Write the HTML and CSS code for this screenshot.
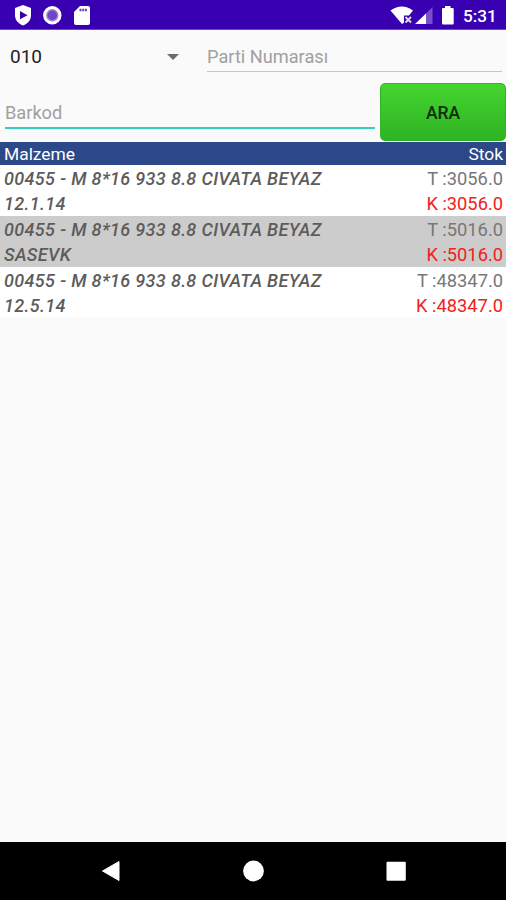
FILE: index.html
```html
<!DOCTYPE html>
<html lang="tr">
<head>
<meta charset="utf-8">
<title>Stok</title>
<link rel="stylesheet" href="styles.css">
</head>
<body>
<header class="status">
  <svg class="status-left" width="100" height="29" viewBox="0 0 100 29">
    <path fill="#fff" d="M23 5l8 3v7c0 5-3 8.500-8 10.500c-5-2-8-5.500-8-10.500v-7z"/>
    <path fill="#3900b1" d="M20 11l7.500 4.200l-7.500 4z"/>
    <circle cx="52.300" cy="15.300" r="7.700" fill="#9d80da" stroke="#fff" stroke-width="3"/>
    <circle cx="52.300" cy="15.300" r="4.700" fill="#7045c6"/>
    <path fill="#fff" d="M80 6h8q2 0 2 2v15q0 2-2 2h-12q-2 0-2-2v-11z"/>
    <path stroke="#6b42c4" stroke-width="2.500" stroke-dasharray="2 .7" d="M79.500 10h7.400" />
  </svg>
  <svg class="status-right" width="66" height="29" viewBox="390 0 66 29">
    <path fill="#fff" d="M390.500 10.500Q402 2.500 413 10.500L409 15.500H404V22.800L402 24z"/>
    <path stroke="#e4daf5" stroke-width="1.800" d="M405.500 17l5.500 5.500m0-5.500l-5.500 5.500"/>
    <path fill="#7950ca" d="M432.500 7v17h-8v-9z"/>
    <path fill="#fff" d="M426 13.500V24H415z"/>
    <path fill="#fff" d="M445 6h5.500v2h2.200q1 0 1 1v14.500q0 1-1 1h-9.700q-1 0-1-1v-14.500q0-1 1-1h2z"/>
  </svg>
  <span class="clock">5:31</span>
</header>
<main class="content">
  <div class="filters">
    <div class="select"><span>010</span><i class="arrow"></i></div>
    <div class="field lot">Parti Numarası</div>
  </div>
  <div class="search">
    <div class="field barcode">Barkod</div>
    <button class="button">ARA</button>
  </div>
  <div class="head"><span>Malzeme</span><span>Stok</span></div>
  <div class="row">
    <div class="name">00455 - M 8*16 933 8.8 CIVATA BEYAZ<br>12.1.14</div>
    <div class="stock">T :3056.0<br><span class="red">K :3056.0</span></div>
  </div>
  <div class="row alt">
    <div class="name">00455 - M 8*16 933 8.8 CIVATA BEYAZ<br>SASEVK</div>
    <div class="stock">T :5016.0<br><span class="red">K :5016.0</span></div>
  </div>
  <div class="row">
    <div class="name">00455 - M 8*16 933 8.8 CIVATA BEYAZ<br>12.5.14</div>
    <div class="stock">T :48347.0<br><span class="red">K :48347.0</span></div>
  </div>
</main>
<nav class="nav">
  <svg width="506" height="58" viewBox="0 0 506 58">
    <path fill="#fff" stroke="#fff" stroke-linejoin="round" d="M119 19.500v19l-16.500-9.500z"/>
    <circle cx="253.500" cy="29" r="10.400" fill="#fff"/>
    <rect x="386.500" y="19.800" width="19.300" height="19" rx="1" fill="#fff"/>
  </svg>
</nav>
</body>
</html>
```

FILE: styles.css
```css
* { box-sizing: border-box; }
body {
  margin: 0;
  width: 506px;
  height: 900px;
  display: flex;
  flex-direction: column;
  overflow: hidden;
  background: #fafafa;
  font: 18px/25px Roboto, sans-serif;
}
.status {
  height: 30px;
  flex: none;
  display: flex;
  background: #3900b1;
  border-bottom: 1px solid #6e4ac4;
  color: #fff;
}
.status-right { margin-left: 290px; }
.clock {
  margin-left: 7px;
  font-size: 17.200px;
  font-weight: 500;
  line-height: 32px;
}
.content { flex: 1; }
.filters { display: flex; height: 53px; }
.select {
  width: 179px;
  margin-right: 28px;
  padding-left: 10px;
  display: flex;
  justify-content: space-between;
  align-items: center;
  color: #222;
  font-size: 19px;
}
.arrow {
  border: 6px solid transparent;
  border-top-color: #6b6b6b;
  border-bottom: 0;
}
.field { color: #a0a0a0; font-size: 18.200px; }
.lot {
  width: 295px;
  height: 42px;
  padding-top: 14px;
  border-bottom: 1px solid #c6c6c6;
}
.search { display: flex; height: 59px; }
.barcode {
  width: 370px;
  height: 46px;
  margin: 0 5px;
  padding-top: 17px;
  border-bottom: 2px solid #35d0bd;
}
.button {
  flex: 1;
  height: 58px;
  padding: 1px 0 0;
  border: 1px solid #2eb424;
  border-radius: 5px;
  background: linear-gradient(#44d52f, #2fb324);
  color: #132d0d;
  font: 500 17.500px Roboto, sans-serif;
}
.head {
  height: 23px;
  padding: 0 3px 0 4px;
  display: flex;
  justify-content: space-between;
  background: #2d4888;
  color: #fff;
  font-size: 17.400px;
  line-height: 24px;
}
.row {
  height: 51px;
  padding: 1px 3px 0 4px;
  display: flex;
  justify-content: space-between;
  background: #fff;
}
.alt { background: #ccc; }
.name {
  color: #5c5c5c;
  font-weight: 500;
  font-style: italic;
  letter-spacing: 0.350px;
}
.stock { color: #777; font-size: 18.300px; text-align: right; }
.red { color: #f32020; }
.nav { flex: none; height: 58px; background: #000; }
.nav svg { display: block; }
```
